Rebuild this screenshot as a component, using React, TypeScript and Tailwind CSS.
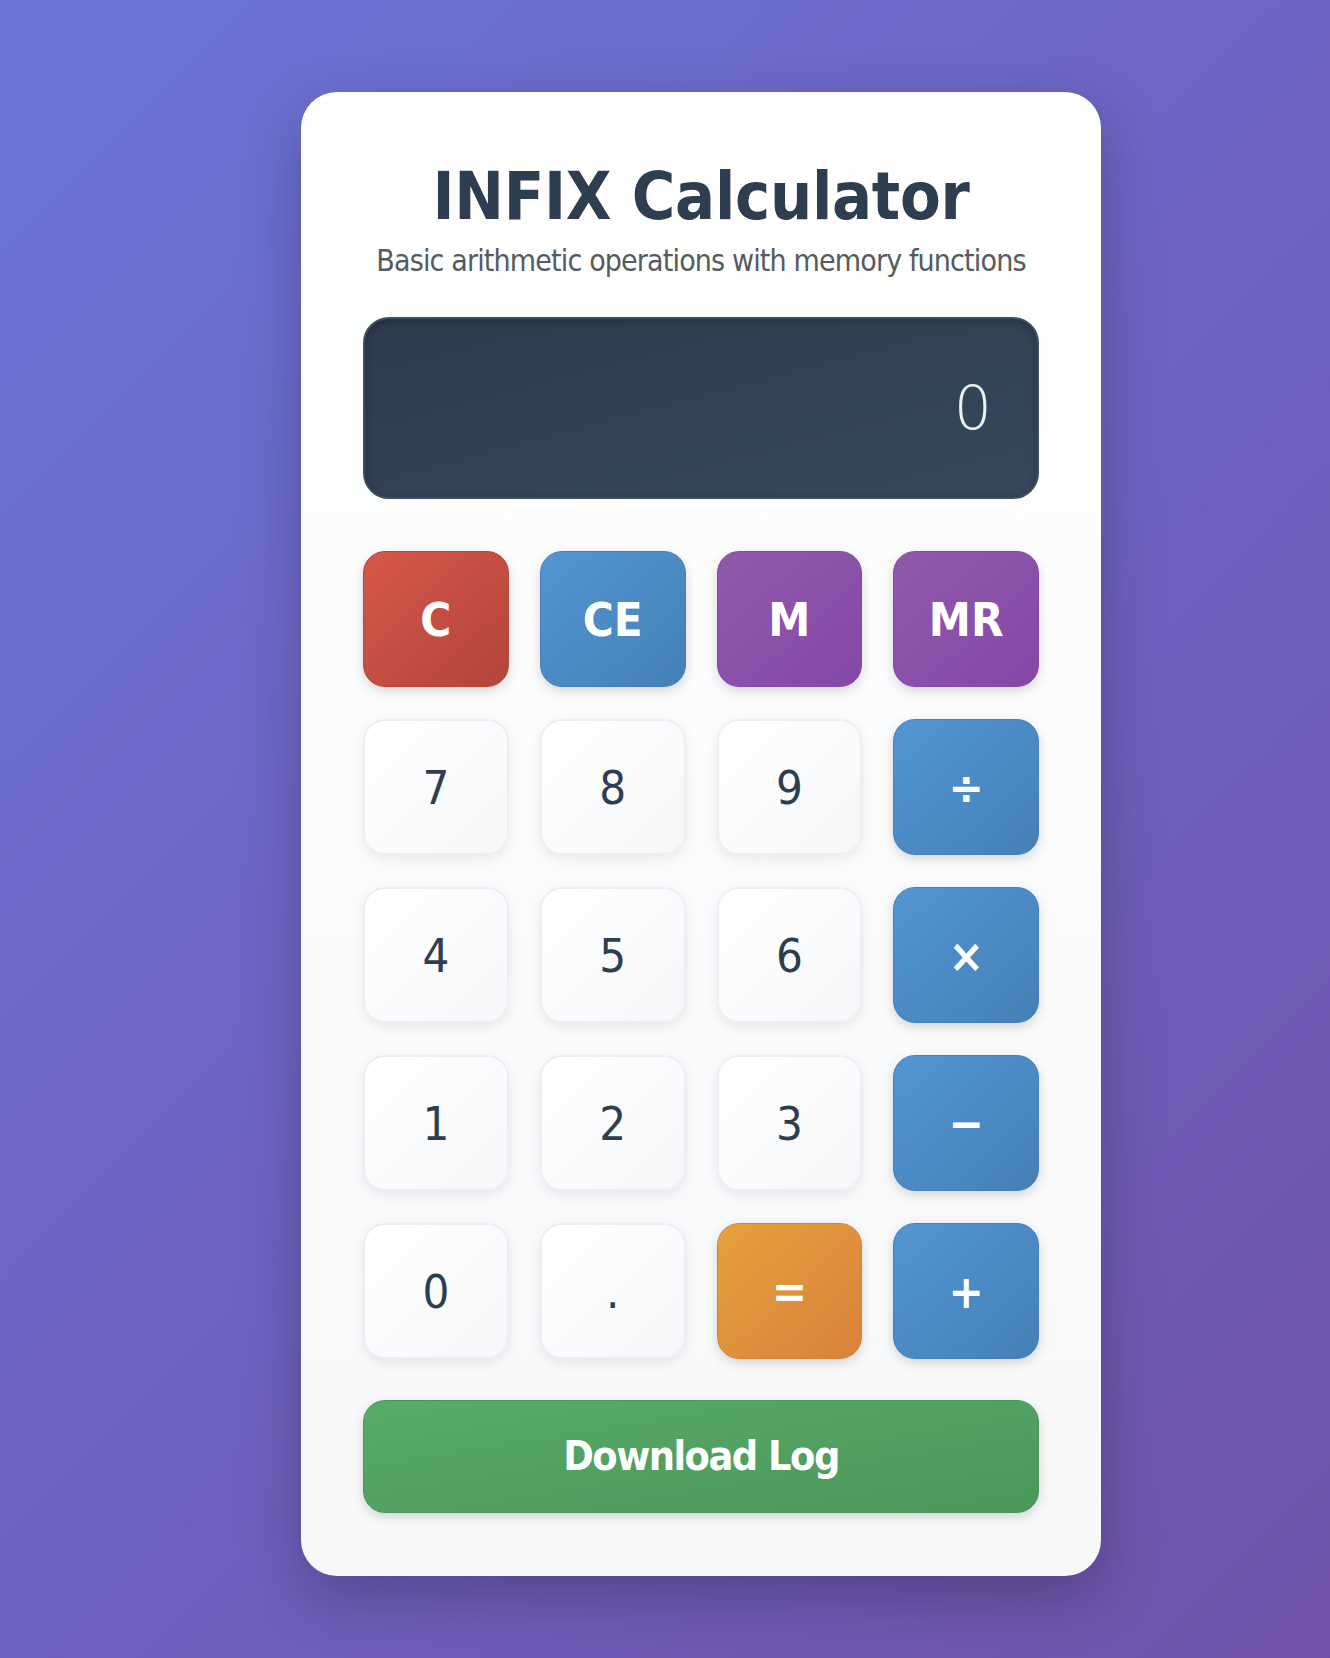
import React from 'react'

type Key = {
  label: string
  kind: 'num' | 'clear' | 'ce' | 'mem' | 'op' | 'eq'
}

const KEYS: Key[] = [
  { label: 'C', kind: 'clear' },
  { label: 'CE', kind: 'ce' },
  { label: 'M', kind: 'mem' },
  { label: 'MR', kind: 'mem' },
  { label: '7', kind: 'num' },
  { label: '8', kind: 'num' },
  { label: '9', kind: 'num' },
  { label: '÷', kind: 'op' },
  { label: '4', kind: 'num' },
  { label: '5', kind: 'num' },
  { label: '6', kind: 'num' },
  { label: '×', kind: 'op' },
  { label: '1', kind: 'num' },
  { label: '2', kind: 'num' },
  { label: '3', kind: 'num' },
  { label: '−', kind: 'op' },
  { label: '0', kind: 'num' },
  { label: '.', kind: 'num' },
  { label: '=', kind: 'eq' },
  { label: '+', kind: 'op' },
]

const KIND_CLASS: Record<Key['kind'], string> = {
  num: 'border-2 border-[#eceef1] bg-linear-to-br from-white to-[#f5f7f9] font-normal text-[#2c3e50] shadow-[0_4px_12px_rgba(0,0,0,0.08)]',
  clear:
    'border border-[#b84634] bg-linear-to-br from-[#d6584a] to-[#b3443a] font-bold text-white shadow-[0_4px_12px_rgba(0,0,0,0.15)]',
  ce: 'border border-[#4580b8] bg-linear-to-br from-[#5296d3] to-[#4480b6] font-bold text-white shadow-[0_4px_12px_rgba(0,0,0,0.15)]',
  mem: 'border border-[#8549a6] bg-linear-to-br from-[#8f5aae] to-[#8647a6] font-bold text-white shadow-[0_4px_12px_rgba(0,0,0,0.15)]',
  op: 'border border-[#4580b8] bg-linear-to-br from-[#5296d3] to-[#4480b6] font-bold text-white shadow-[0_4px_12px_rgba(0,0,0,0.15)]',
  eq: 'border border-[#d4843a] bg-linear-to-br from-[#e6a13c] to-[#d8823a] font-bold text-white shadow-[0_4px_12px_rgba(0,0,0,0.15)]',
}

export default function App() {
  return (
    <div
      className="flex min-h-screen justify-center bg-[linear-gradient(135deg,#6a75d8_0%,#7152aa_100%)] pt-[92px] pl-[72px]"
      style={{ fontFamily: "'DejaVu Sans Condensed', 'DejaVu Sans', sans-serif" }}
    >
      <div className="flex h-fit w-[800px] flex-col rounded-[36px] bg-linear-to-b from-white to-[#f7f8fa] px-[62px] pt-[65px] pb-[63px] shadow-[0_20px_60px_rgba(0,0,0,0.25)]">
        <h1 className="text-center text-[66px] leading-[1.2] font-bold tracking-[-0.25px] text-[#2c3e50]">
          INFIX Calculator
        </h1>
        <p className="mt-[7px] text-center text-[30px] leading-[1.2] tracking-[-0.85px] whitespace-nowrap text-[#555b61]">
          Basic arithmetic operations with memory functions
        </p>

        {/* display */}
        <div className="mt-[38px] flex h-[182px] items-center justify-end rounded-[26px] border-2 border-[#3c4e63] bg-linear-to-br from-[#2e3b4e] to-[#37485b] pr-[45px] shadow-[inset_0_2px_8px_rgba(0,0,0,0.25)]">
          <span
            className="text-[60px] leading-none font-extralight text-[#ecf0f1]"
            style={{ fontFamily: "'DejaVu Sans', sans-serif" }}
          >
            0
          </span>
        </div>

        <div className="mt-[52px] grid grid-cols-4 gap-x-[31px] gap-y-[32px]">
          {KEYS.map((k) => (
            <button
              key={k.label}
              className={`flex h-[136px] items-center justify-center rounded-[22px] text-[47px] leading-none ${KIND_CLASS[k.kind]}`}
            >
              {k.label}
            </button>
          ))}
        </div>

        <button className="mt-[41px] flex h-[113px] items-center justify-center rounded-[22px] border border-[#4a9659] bg-linear-to-br from-[#58ab69] to-[#4a975a] text-[41px] font-bold tracking-[-1.5px] text-white shadow-[0_4px_12px_rgba(0,0,0,0.15)]">
          Download Log
        </button>
      </div>
    </div>
  )
}
